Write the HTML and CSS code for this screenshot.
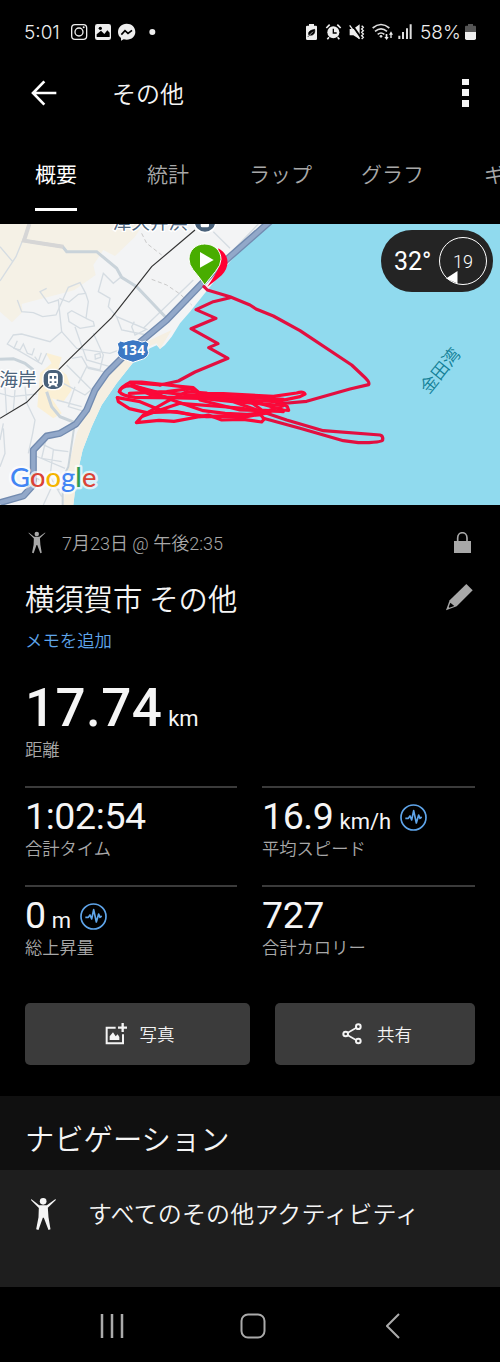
FILE: index.html
```html
<!DOCTYPE html>
<html lang="ja">
<head>
    <meta charset="UTF-8">
    <meta name="viewport" content="width=device-width, initial-scale=1.0">
    <title>その他</title>
    <link rel="stylesheet" href="styles.css">
</head>
<body>
    <!-- Icons used more than once -->
    <svg class="defs" width="0" height="0">
        <symbol id="person" viewBox="92 336 80 102">
            <circle cx="131" cy="349" r="10"/>
            <path d="M95 342 L119 361 H142 L168 342 L169 345 L145 368 L147 397 L153 433 L147 435 L133 398 H130 L117 435 L110 433 L117 397 L118 369 L95 346Z"/>
        </symbol>
        <symbol id="pulse" viewBox="0 0 81 81">
            <circle cx="40.500" cy="40.500" r="37.500" fill="none" stroke="#5fa5ea" stroke-width="5"/>
            <path d="M16 43 H25 L30 36 L35 48 L41 20 L49 57 L56 33 L60 43 L65 39" fill="none" stroke="#5fa5ea" stroke-width="5" stroke-linejoin="round"/>
        </symbol>
    </svg>

    <div class="status-bar">
        <span class="time">5:01</span>
        <svg class="status-left" width="86" height="20" viewBox="210 66 258 60">
            <rect x="215" y="74" width="45" height="44" rx="10" fill="none" stroke="#eee" stroke-width="4"/>
            <circle cx="237" cy="96" r="12" fill="none" stroke="#eee" stroke-width="4"/>
            <circle cx="251" cy="82" r="3" fill="#eee"/>
            <rect x="285" y="72" width="48" height="48" rx="7" fill="#eee"/>
            <path d="M290 111 V103 L303 92 L313 102 L322 91 L329 98 V111Z" fill="#000"/>
            <circle cx="301" cy="85" r="5" fill="#000"/>
            <path d="M380 71 C364 71 354 82 354 96 C354 104 357 110 363 114 V122 L371 118 C391 123 406 111 406 96 C406 81 395 71 380 71Z" fill="#eee"/>
            <path d="M364 104 L375 92 L384 100 L396 91" fill="none" stroke="#000" stroke-width="5"/>
            <circle cx="457" cy="96" r="9" fill="#eee"/>
        </svg>
        <svg class="status-right" width="108" height="20" viewBox="45 66 324 60">
            <path d="M57 72 H72 V77 H78 Q81 77 81 80 V116 Q81 120 77 120 H52 Q48 120 48 116 V80 Q48 77 52 77 H57Z" fill="#eee"/>
            <path d="M56 104 C54 94 62 91 74 88 C76 101 69 108 58 105Z M53 111 L66 98" fill="#000" stroke="#000" stroke-width="2"/>
            <path d="M58 106 L69 95" stroke="#eee" stroke-width="2"/>
            <circle cx="130" cy="97" r="18" fill="#eee"/>
            <path d="M109 84 L119 74 M142 74 L152 84 M117 112 L112 118 M143 112 L148 118" stroke="#eee" stroke-width="5"/>
            <path d="M130 86 V99 H140" fill="none" stroke="#000" stroke-width="4"/>
            <path d="M179 87 H190 L209 73 V118 L190 106 H179Z" fill="#eee"/>
            <path d="M184 72 L214 114" stroke="#000" stroke-width="6"/>
            <path d="M179 76 L208 116" stroke="#eee" stroke-width="4"/>
            <path d="M215 77 L220 82 L215 87 L220 92 L215 97 L220 102 L215 107 L220 112 L215 117" fill="none" stroke="#eee" stroke-width="4"/>
            <path d="M248 84 Q273 63 298 84 M255 94 Q273 79 291 94 M263 103 Q273 95 283 103" fill="none" stroke="#ddd" stroke-width="5"/>
            <circle cx="273" cy="109" r="4" fill="#ddd"/>
            <path d="M303 94 L309 104 H305 V114 H301 V104 H297Z M290 120 L283 111 H287 V102 H292 V111 H296Z" fill="#eee"/>
            <path d="M328 107 V117 M339 96 V117 M351 85 V117 M362 73 V117" stroke="#ddd" stroke-width="6"/>
        </svg>
        <span class="battery">58%</span>
        <svg width="11" height="16" viewBox="0 0 33 48">
            <path d="M9 0 H24 V5 H30 Q33 5 33 9 V24 H0 V9 Q0 5 3 5 H9Z" fill="#555"/>
            <path d="M0 24 H33 V43 Q33 48 28 48 H5 Q0 48 0 43Z" fill="#eee"/>
        </svg>
    </div>

    <header class="app-bar">
        <svg width="26" height="26" viewBox="0 0 78 78">
            <path d="M76 39 H8 M40 4 L6 39 L40 74" fill="none" stroke="#fff" stroke-width="8"/>
        </svg>
        <h1>その他</h1>
        <svg class="more" width="7" height="28" viewBox="0 0 7 28">
            <path d="M0 0h7v6H0z M0 10h7v7H0z M0 21h7v7H0z" fill="#f5f5f5"/>
        </svg>
    </header>

    <nav class="tabs">
        <a class="tab active">概要</a>
        <a class="tab">統計</a>
        <a class="tab">ラップ</a>
        <a class="tab">グラフ</a>
        <a class="tab">ギ</a>
    </nav>

    <div class="map">
        <svg class="map-canvas" width="500" height="281" viewBox="0 12 1500 843">
            <rect y="12" width="1500" height="843" fill="#90daee"/>
            <!-- Land -->
            <path d="M0 12 H815 L750 60 L690 125 L630 200 L570 275 L540 310 L515 350 L495 375 L480 387 L470 376 L450 385 L400 427 L350 490 L305 555 L275 620 L248 690 L230 770 L220 855 H0Z" fill="#f3f4f5"/>
            <path d="M0 12 H430 L405 50 L345 108 L310 90 L280 135 L287 165 L222 211 L110 240 L65 252 L68 275 L36 307 L0 275Z" fill="#f5f1e6"/>
            <path d="M515 330 L480 387 L470 370 L445 380 L400 427 L350 490 L305 555 L275 620 L248 690 L230 770 L220 855 H190 L205 740 L230 640 L275 540 L340 450 L430 370Z" fill="#f5efe2"/>
            <path d="M137 398 L185 412 L175 445 L200 465 L215 510 L190 545 L155 535 L185 580 L160 595 L112 560 L120 460 L155 430Z" fill="#fbf0d5"/>
            <!-- Small streets -->
            <g fill="none" stroke="#d5dce2" stroke-width="4">
                <path d="M0 183 L48 110 L88 12 M0 80 L38 125"/>
                <path d="M52 240 L65 275 L100 278 L128 290 L168 285 L205 202 L240 188 L257 220 L265 245 L258 295 L215 272 L203 280 L207 305 L240 325 L283 318 L280 305 L258 295"/>
                <path d="M178 235 L207 246 L235 223 L257 220 M140 205 L120 215 L145 250 L175 240 L185 335 L150 365 L65 342 L40 345 L22 372 L125 432 L140 400"/>
                <path d="M52 362 L42 385 L60 390 L70 372 L82 400 L96 405 L103 385 M104 410 L115 425 L124 398"/>
                <path d="M362 172 L340 190 L310 160 L295 215 L330 235 L325 260 L350 290 L440 328 L405 345 L395 320 L403 305 M350 290 L365 330 L440 345"/>
                <path d="M185 335 L230 385 L330 400 L385 380 M225 320 L260 420 L330 440 M280 340 L310 405 L300 450 L260 440 L235 490 M215 415 L245 410 L265 445 L310 455"/>
                <path d="M200 435 L285 520 M190 490 L255 525 L285 500 M285 404 L300 400 L302 412 L286 417Z M170 540 L245 560 M225 500 L205 560 L255 575"/>
                <path d="M0 520 L35 530 L110 522 M15 500 L20 585 M45 510 L40 570 M75 500 L80 548 M80 548 L105 600 L98 640 L85 700 M10 610 L0 660 M10 625 L15 700 L0 740"/>
                <path d="M110 665 L165 690 L205 695 M140 650 L125 715 L185 725 M160 690 L150 770 L185 830 M100 705 L195 745 M130 855 L160 790 M100 770 L180 810"/>
                <path d="M640 35 L690 85 M775 12 L700 90 M430 325 L580 180"/>
            </g>
            <!-- Wider streets -->
            <g fill="none" stroke="#c9d3da" stroke-width="9">
                <path d="M75 62 L188 80 L200 95 H290 L350 145 L365 172 L410 200 L500 295"/>
                <path d="M0 418 L40 416 L75 430 L100 450 M140 515 L155 560 L180 590 L225 608"/>
                <path d="M222 625 L205 740 L188 775 V855" stroke-width="6"/>
            </g>
            <path d="M88 12 L72 62 L190 80" fill="none" stroke="#d6d6d6" stroke-width="12"/>
            <path d="M425 40 L440 70 L485 105 M455 178 L500 195 L540 222 L575 255" fill="none" stroke="#c9c9c9" stroke-width="3" stroke-dasharray="12 8"/>
            <!-- Highway -->
            <g fill="none" stroke-linejoin="round">
                <path d="M815 0 L690 110 L640 155 L500 300 L380 400 L320 460 L285 510 L260 570 L228 612 L180 640 L140 648 L100 690 V795 L70 828 L0 848" stroke="#728bb0" stroke-width="21"/>
                <path d="M815 0 L690 110 L640 155 L500 300 L380 400 L320 460 L285 510 L260 570 L228 612 L180 640 L140 648 L100 690 V795 L70 828 L0 848" stroke="#92a8c9" stroke-width="13"/>
            </g>
            <!-- Railway -->
            <path d="M585 30 L455 140 L335 293 L210 415 L125 500 L80 547 L0 595" fill="none" stroke="#333" stroke-width="3.500"/>
            <!-- Stations -->
            <g class="place">
                <text x="338" y="27">津久井浜</text>
                <text x="-2" y="499">海岸</text>
            </g>
            <circle cx="615" cy="5" r="33" fill="#49617a" stroke="#fff" stroke-width="5"/>
            <rect x="602" y="-8" width="25" height="30" rx="5" fill="#fff"/>
            <path d="M607 8 H622" stroke="#49617a" stroke-width="8"/>
            <g>
                <rect x="129" y="448" width="61" height="61" rx="24" fill="#49617a" stroke="#fff" stroke-width="4"/>
                <path d="M150 459 H168 Q174 459 174 466 V488 Q174 492 170 494 L174 500 H167 L163 496 H155 L151 500 H144 L148 494 Q144 492 144 488 V466 Q144 459 150 459Z" fill="#fff"/>
                <path d="M149 468 H156 V476 H149Z M162 468 H169 V476 H162Z M149 484 H155 V489 H149Z M163 484 H169 V489 H163Z" fill="#49617a"/>
            </g>
            <!-- Route shield -->
            <path d="M352 371 L362 363 Q372 370 384 362 L399 359 L415 362 Q426 370 437 363 L447 371 Q439 385 446 398 Q443 415 420 420 L399 427 L378 420 Q355 415 352 398 Q359 385 352 371Z" fill="#3b78c4" stroke="#fff" stroke-width="3"/>
            <text class="shield" x="400" y="405">134</text>
            <text class="bay" transform="translate(1286 524) rotate(-51)">金田湾</text>
            <!-- Finish and start pins -->
            <path d="M655 85 C690 105 690 140 665 166 Q645 184 622 200 Q646 165 655 145Z" fill="#ff0033"/>
            <!-- Track -->
            <g class="track">
                <path d="M612 200 L622 210 L690 230 L750 255 L768 267 L820 288 L900 332 L1055 435 L1090 468 Q1111 487 1106 494 L1050 507 L920 544 L830 552"/>
                <path d="M690 233 L640 245 L588 269 L648 295 L573 326 L654 371 L626 383 L684 415 L585 456 L535 483 L480 495"/>
                <path d="M800 580 L860 600 L970 632 L1140 645 Q1150 647 1148 660 Q1146 668 1075 668 L1030 662 L900 625 L790 595"/>
            </g>
            <g class="track laps">
                <path d="M480 495 L390 487 Q362 500 358 515 Q365 527 405 532 L530 534 L670 537 L830 545 L900 530 L915 522 Q910 513 890 519 L820 529 L670 521 L600 520 L580 503 L540 499 L425 486 L390 486 L400 497 L470 516 L620 529 L760 545 L850 570 L866 571 L862 560 L820 535"/>
                <path d="M358 515 Q365 493 405 499 L455 515 L510 538 L610 572 L675 580 L782 585 L793 597 L785 606 L730 598 L665 600 L625 585 L522 604 L477 601 L409 608 L430 585 L500 545 L560 515 L620 519"/>
                <path d="M352 533 L355 545 L388 566 L440 578 L530 575 L600 590 L720 587 L790 577 L850 557 L730 547 L625 532 L500 531 L450 524 L398 500"/>
                <path d="M352 533 L420 545 L480 570 L620 590 L740 590 L810 577 L720 564 L540 550 L480 570 L430 588"/>
                <path d="M388 520 L500 515 L570 506 L595 520 L740 537 L785 570 L850 575 M600 540 L720 570 L840 574"/>
                <path d="M600 525 L850 538 M620 537 L700 545 L800 580"/>
            </g>
            <path d="M614 195 Q597 170 579 149 Q567 134 567 117 C567 90 588 72 614 72 C642 72 663 91 663 118 Q663 135 646 155 Q627 178 614 195Z" fill="#48ad00" stroke="#fff" stroke-width="3"/>
            <path d="M600 96 V143 L641 120Z" fill="#fff"/>
            <text class="google" x="30" y="801"><tspan fill="#4285f4">G</tspan><tspan fill="#db4437">o</tspan><tspan fill="#f4b400">o</tspan><tspan fill="#4285f4">g</tspan><tspan fill="#2e9c52">l</tspan><tspan fill="#db4437">e</tspan></text>
        </svg>
        <div class="weather">
            <span class="temp">32°</span>
            <span class="wind">19
                <svg class="wind-arrow" width="12" height="13" viewBox="0 0 12 13">
                    <path d="M11.500 0 V12.500 L0 7.500Z" fill="#fff"/>
                </svg>
            </span>
        </div>
    </div>

    <main class="summary">
        <div class="date-row">
            <svg class="person" width="18" height="23"><use href="#person"/></svg>
            <span>7月23日 @ 午後2:35</span>
            <svg class="lock" width="17" height="21" viewBox="0 0 51 63">
                <path d="M11 28 V18 C11 -3 39 -3 39 18 V28" fill="none" stroke="#a8a8a8" stroke-width="5"/>
                <path d="M0 27 H51 V63 H0Z" fill="#a8a8a8"/>
            </svg>
        </div>
        <div class="title-row">
            <h2>横須賀市 その他</h2>
            <svg width="27" height="27" viewBox="0 0 81 81">
                <path d="M61 0 L80 19 L32 67 L0 79 L11 49Z" fill="#a8a8a8"/>
                <path d="M13 56 L25 66 L10 71 L8 69Z" fill="#000"/>
            </svg>
        </div>
        <a class="memo">メモを追加</a>

        <div class="distance"><strong>17.74</strong><span class="unit">km</span></div>
        <div class="label">距離</div>

        <div class="stats">
            <div class="stat">
                <div class="value">1:02:54</div>
                <div class="label">合計タイム</div>
            </div>
            <div class="stat">
                <div class="value">16.9<span class="unit">km/h</span><svg class="pulse" width="27" height="27"><use href="#pulse"/></svg></div>
                <div class="label">平均スピード</div>
            </div>
            <div class="stat">
                <div class="value">0<span class="unit">m</span><svg class="pulse" width="27" height="27"><use href="#pulse"/></svg></div>
                <div class="label">総上昇量</div>
            </div>
            <div class="stat">
                <div class="value">727</div>
                <div class="label">合計カロリー</div>
            </div>
        </div>

        <div class="actions">
            <button class="photo">
                <svg width="22" height="22" viewBox="0 0 66 66">
                    <path d="M32 14 H5 V61 H54 V34" fill="none" stroke="#f4f4f4" stroke-width="6"/>
                    <path d="M53 0 V27 M39 14 H66" stroke="#f4f4f4" stroke-width="7"/>
                    <path d="M14 51 V40 L24 28 L32 40 L38 34 L43 42 V51Z" fill="#f4f4f4"/>
                </svg>
                <span>写真</span>
            </button>
            <button class="share">
                <svg width="20" height="22" viewBox="0 0 60 66">
                    <path d="M47 12 L11 33 L47 54" fill="none" stroke="#f4f4f4" stroke-width="5"/>
                    <g fill="#3b3b3b" stroke="#f4f4f4" stroke-width="6">
                        <circle cx="49" cy="11" r="7"/>
                        <circle cx="11" cy="33" r="7"/>
                        <circle cx="49" cy="54" r="7"/>
                    </g>
                </svg>
                <span>共有</span>
            </button>
        </div>
    </main>

    <section class="navigation">
        <h2>ナビゲーション</h2>
        <a class="nav-item">
            <svg class="person" width="27" height="34"><use href="#person"/></svg>
            <span>すべてのその他アクティビティ</span>
        </a>
    </section>

    <footer class="system-nav">
        <svg width="24" height="26" viewBox="0 0 24 26">
            <path d="M2 1 V25 M12 1 V25 M22 1 V25" stroke="#aaa" stroke-width="2.500"/>
        </svg>
        <svg class="home" width="26" height="26" viewBox="0 0 26 26">
            <rect x="1.500" y="1.500" width="23" height="23" rx="6.500" fill="none" stroke="#aaa" stroke-width="2"/>
        </svg>
        <svg width="14" height="26" viewBox="0 0 14 26">
            <path d="M13 1 L1 13 L13 25" fill="none" stroke="#aaa" stroke-width="2"/>
        </svg>
    </footer>
</body>
</html>
```

FILE: styles.css
```css
* {
    box-sizing: border-box;
}

body {
    margin: 0;
    width: 500px;
    background-color: #000;
    color: #f5f5f5;
    font-family: Roboto, "Noto Sans CJK JP", sans-serif;
    font-weight: 350;
    overflow-x: hidden;
}

h1, h2 {
    margin: 0;
    font-weight: 350;
}

svg {
    display: block;
    flex-shrink: 0;
}

.defs {
    position: absolute;
}

/* Status bar */
.status-bar {
    display: flex;
    align-items: center;
    height: 64px;
    padding: 0 24px;
    font-family: Inter, sans-serif;
    font-size: 19px;
    font-weight: 300;
    color: #eee;
}

.time {
    width: 46px;
}

.status-right {
    margin-left: auto;
}

.battery {
    width: 45px;
    margin: 0 0 0 7px;
}

/* App bar */
.app-bar {
    display: flex;
    align-items: center;
    height: 58px;
    padding: 0 31px;
}

.app-bar h1 {
    margin-left: 55px;
    padding-top: 3px;
    font-size: 24px;
    line-height: 30px;
}

.more {
    margin-left: auto;
}

/* Tabs */
.tabs {
    display: flex;
    gap: 70px;
    height: 102px;
    padding: 0 35px;
    overflow: hidden;
}

.tab {
    flex-shrink: 0;
    height: 89px;
    padding-top: 37px;
    font-size: 21px;
    line-height: 32px;
    color: #a8a8a8;
    white-space: nowrap;
}

.tab:nth-child(3) {
    margin-left: -10px;
}

.tab:nth-child(4) {
    margin-left: -21px;
}

.tab:nth-child(5) {
    margin-left: -10px;
}

.tab.active {
    color: #fff;
    font-weight: 400;
    border-bottom: 3px solid #fff;
}

/* Map */
.map {
    position: relative;
    height: 281px;
    overflow: hidden;
}

.place text {
    font-size: 56px;
    font-weight: 400;
    fill: #4c647c;
    stroke: #fff;
    stroke-width: 8px;
    paint-order: stroke;
}

.shield {
    font-family: "Open Sans", sans-serif;
    font-size: 40px;
    font-weight: 700;
    fill: #fff;
    text-anchor: middle;
    letter-spacing: 1px;
}

.bay {
    font-size: 52px;
    fill: #138097;
}

.track {
    fill: none;
    stroke: #e20f40;
    stroke-width: 9.5px;
    stroke-linejoin: round;
    stroke-linecap: round;
}

.laps {
    stroke: #fb0838;
}

.google {
    font-family: Lato, sans-serif;
    font-size: 82px;
    font-weight: 500;
    stroke: #fff;
    stroke-opacity: 0.7;
    stroke-width: 14px;
    stroke-linejoin: round;
    paint-order: stroke;
}

.weather {
    position: absolute;
    top: 6px;
    right: 7px;
    display: flex;
    align-items: center;
    justify-content: space-between;
    width: 112px;
    height: 62px;
    padding: 0 6px 0 13px;
    border-radius: 31px;
    background-color: #242424;
    color: #fff;
}

.temp {
    font-size: 25px;
    font-weight: 400;
}

.wind {
    position: relative;
    width: 48px;
    height: 48px;
    border: 1.5px solid #fff;
    border-radius: 50%;
    font-size: 18px;
    font-weight: 300;
    line-height: 48px;
    text-align: center;
}

.wind-arrow {
    position: absolute;
    left: 6px;
    bottom: 0;
}

/* Activity summary */
.summary {
    height: 591px;
    padding: 19px 25px 0;
}

.date-row {
    display: flex;
    align-items: center;
    height: 36px;
    padding: 0 3px;
    font-size: 18px;
    color: #a8a8a8;
}

.date-row .person {
    margin-right: 16px;
}

.person {
    fill: #f5f5f5;
}

.date-row .person {
    fill: #a8a8a8;
}

.lock {
    margin-left: auto;
    margin-right: 1px;
}

.title-row {
    display: flex;
    align-items: center;
    justify-content: space-between;
    height: 50px;
    margin-top: 14px;
    padding-right: 2px;
}

.title-row h2 {
    padding-top: 2px;
    font-size: 29.3px;
    line-height: 40px;
}

.title-row svg {
    margin-bottom: 4px;
}

.memo {
    display: block;
    height: 24px;
    margin-top: 5px;
    font-size: 17.4px;
    line-height: 24px;
    color: #5fa5ea;
}

.distance {
    height: 58px;
    margin-top: 26px;
    line-height: 58px;
}

.distance strong {
    font-size: 53px;
    font-weight: 500;
    letter-spacing: 0.4px;
}

.unit {
    margin-left: 6px;
    font-size: 22px;
    font-weight: 400;
    letter-spacing: 0;
}

.label {
    height: 24px;
    font-size: 17.3px;
    line-height: 26px;
    color: #a8a8a8;
}

.stats {
    display: grid;
    grid-template-columns: 212px 213px;
    column-gap: 25px;
    margin-top: 25px;
}

.stat {
    height: 99px;
    padding-top: 6px;
    border-top: 2px solid #3b3b3b;
}

.stat .label {
    line-height: 24px;
}

.value {
    display: flex;
    align-items: baseline;
    height: 43px;
    font-size: 37.5px;
    font-weight: 400;
    line-height: 45px;
    letter-spacing: -0.4px;
}

.pulse {
    align-self: center;
    margin: 3px 0 0 9px;
}

.actions {
    display: flex;
    gap: 25px;
    margin-top: 19px;
}

button {
    display: flex;
    align-items: center;
    justify-content: center;
    gap: 13px;
    height: 62px;
    padding: 0;
    border: none;
    border-radius: 5px;
    background-color: #3b3b3b;
    color: #f4f4f4;
    font-family: inherit;
    font-size: 17.5px;
    font-weight: 350;
}

button span {
    padding-bottom: 2px;
}

.photo {
    width: 225px;
    padding-left: 4px;
}

.share {
    width: 200px;
    gap: 15px;
    padding-left: 4px;
}

/* Navigation section */
.navigation h2 {
    height: 74px;
    padding: 13px 25px 0;
    background-color: #101010;
    font-size: 29.3px;
    line-height: 62px;
}

.nav-item {
    display: flex;
    height: 117px;
    padding: 27px 30px 0;
    background-color: #1e1e1e;
    font-size: 24px;
    line-height: 36px;
}

.nav-item span {
    margin-left: 31px;
    letter-spacing: 0.15px;
}

/* System buttons */
.system-nav {
    display: flex;
    align-items: center;
    justify-content: space-between;
    height: 75px;
    padding: 3px 100px 0;
}

.home {
    margin-right: 5px;
}
```
